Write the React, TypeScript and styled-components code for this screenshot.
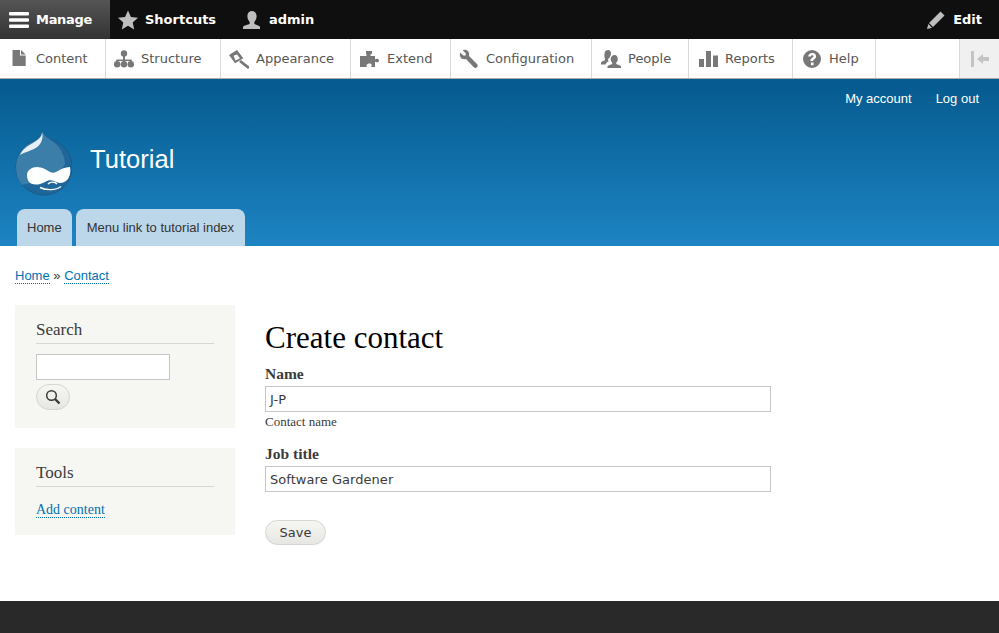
import { FunctionComponent, ReactNode } from "react"
import styled, { createGlobalStyle } from "styled-components"

const GlobalStyle = createGlobalStyle`
	html, body {
		margin: 0;
		padding: 0;
		background: white;
	}
	* {
		box-sizing: border-box;
	}
`

const Page = styled.div`
	display: flex;
	flex-direction: column;
	height: 633px;
	overflow: hidden;
	font-family: "Liberation Sans", Arial, sans-serif;
`

const TopBar = styled.div`
	display: flex;
	flex-shrink: 0;
	height: 39px;
	background-color: #0f0f0f;
	font-family: "DejaVu Sans", sans-serif;
	font-size: 13px;
	font-weight: 700;
	color: white;
`

const TopItem = styled.div<{$active?: boolean; $push?: boolean; $end?: number}>`
	display: flex;
	align-items: center;
	gap: 7px;
	width: ${({$end}) => $end ? `${$end}px` : 'auto'};
	padding: 0 8px 0 ${({$active}) => $active ? 9 : 8}px;
	margin-left: ${({$push}) => $push ? 'auto' : '0'};
	background: ${({$active}) => $active ? 'linear-gradient(#555555, #333333)' : 'none'};
`

const ManageLabel = styled.span`
	letter-spacing: -0.3px;
`

const EditLabel = styled.span`
	margin-right: 9px;
`

const Tray = styled.div`
	display: flex;
	flex-shrink: 0;
	height: 40px;
	background-color: white;
	border-bottom: 1px solid #aaaaaa;
	font-family: "DejaVu Sans", sans-serif;
	font-size: 13px;
	color: #565656;
`

const TrayItem = styled.div<{$width: number; $pad?: number}>`
	display: flex;
	align-items: center;
	gap: 7px;
	width: ${({$width}) => $width}px;
	padding-left: ${({$pad}) => $pad ?? 9}px;
	border-right: 1px solid #d9d9d9;
`

const TrayToggle = styled.div`
	display: flex;
	align-items: center;
	justify-content: center;
	margin-left: auto;
	width: 40px;
	background-color: #f0f0f0;
	border-left: 1px solid #d9d9d9;
`

const Header = styled.header`
	display: flex;
	flex-direction: column;
	flex-shrink: 0;
	height: 167px;
	background: linear-gradient(#0779bf00, #1d84c3 100%), #055a8e;
	color: white;
`

const SecondaryMenu = styled.div`
	display: flex;
	justify-content: flex-end;
	gap: 24px;
	padding: 12px 20px 0 0;
	font-size: 13px;
	line-height: 15px;
`

const Branding = styled.div`
	display: flex;
	align-items: center;
	gap: 18px;
	margin-top: 24px;
	padding-left: 15px;
`

const SiteName = styled.div`
	margin-bottom: 8px;
	font-size: 25.6px;
	line-height: 30px;
`

const Tabs = styled.div`
	display: flex;
	gap: 4px;
	margin-top: auto;
	padding-left: 17px;
`

const Tab = styled.div<{$pad: number}>`
	height: 37px;
	padding: 11px ${({$pad}) => $pad}px 0;
	border-radius: 8px 8px 0 0;
	background-color: #bcd7ea;
	color: #333333;
	font-size: 13px;
	line-height: 15px;
`

const Main = styled.main`
	flex: 1;
	padding: 22px 15px 0;
`

const A = styled.a`
	color: #0071b3;
	text-decoration: none;
	border-bottom: 1px dotted #0071b3;
`

const Breadcrumb = styled.div`
	font-size: 13px;
	line-height: 15px;
	color: #3b3b3b;
`

const Columns = styled.div`
	display: flex;
	margin-top: 22px;
`

const Sidebar = styled.aside`
	display: flex;
	flex-direction: column;
	gap: 20px;
	flex-shrink: 0;
	width: 220px;
`

const Block = styled.section<{$height: number}>`
	height: ${({$height}) => $height}px;
	padding: 16px 21px 0;
	background-color: #f6f6f2;
`

const BlockTitle = styled.h2`
	margin: 0 0 10px;
	padding-bottom: 4px;
	border-bottom: 1px solid #d6d6d6;
	font-family: "Liberation Serif", Georgia, serif;
	font-size: 17px;
	font-weight: 400;
	line-height: 18px;
	color: #3b3b3b;
`

const SearchInput = styled.div`
	width: 134px;
	height: 26px;
	background-color: white;
	border: 1px solid #c6c6c6;
`

const RoundButton = styled.div`
	display: flex;
	align-items: center;
	justify-content: center;
	border: 1px solid #d4d4d4;
	border-radius: 13px;
	background: linear-gradient(#f6f6f3, #e6e6e3);
	color: #3a3a3a;
	font-family: "DejaVu Sans", sans-serif;
	font-size: 13px;
`

const SearchButton = styled(RoundButton)`
	width: 34px;
	height: 26px;
	margin-top: 4px;
`

const SaveButton = styled(RoundButton)`
	width: 61px;
	height: 25px;
	margin-top: 28px;
`

const SideLink = styled(A)`
	font-family: "Liberation Serif", Georgia, serif;
	font-size: 14px;
`

const SideLinkRow = styled.div`
	padding-top: 4px;
	line-height: 15px;
`

const Content = styled.div`
	flex-shrink: 0;
	width: 506px;
	margin-left: 30px;
	padding-top: 16px;
	font-family: "Liberation Serif", Georgia, serif;
	color: #3b3b3b;
`

const Title = styled.h1`
	margin: 0;
	font-size: 31px;
	font-weight: 400;
	line-height: 34px;
	color: black;
`

const Field = styled.div`
	margin-top: 10px;
	& + & {
		margin-top: 16px;
	}
`

const Label = styled.div`
	margin-bottom: 3px;
	font-size: 15.5px;
	font-weight: 700;
	line-height: 18px;
`

const TextInput = styled.div`
	height: 26px;
	padding-left: 4px;
	border: 1px solid #c6c6c6;
	font-family: "DejaVu Sans", sans-serif;
	font-size: 13px;
	letter-spacing: 0.05px;
	line-height: 26px;
	color: #3b3b3b;
`

const Description = styled.div`
	margin-top: 2px;
	font-size: 13px;
	line-height: 15px;
`

const Footer = styled.footer`
	flex-shrink: 0;
	height: 32px;
	background-color: #292929;
`

const Icon: FunctionComponent<{children: ReactNode; color?: string; size?: number}> = ({children, color = '#787878', size = 20}) => (
	<svg width={size} height={size} viewBox="0 0 20 20" fill={color} style={{flexShrink: 0}}>{children}</svg>
)

const DrupalLogo = () => (
	<svg width="57" height="66" viewBox="0 0 57 66" style={{flexShrink: 0}}>
		<path d="M27 1C27 5 24 8 20 10.500A28 28 0 1 0 36.500 10C32 7.500 29 5 27 1Z" fill="#1f669a" stroke="#175a8a"/>
		<path d="M27 1.500C27 5 24 8 20 11A27.500 27.500 0 0 0 1 37C1 44 3 50 7 55 16 52 40 52 50 34 50 25 44 15 36.500 10.500 32 7.500 29 5 27 1.500Z" fill="#3c7eaa"/>
		<path d="M27 2C27 7 23 10 18 13 12 16 7 20 5 25 10 22 15 21 19 19 25 16 29 10 27 2Z" fill="#e6f0f6"/>
		<path d="M12 45C12 40 17 37 22 37 27 37 31 39.500 35 42 37 43 39 43 41 42 45 39.500 50 37 55 37 56 42 55 48 51 51 47 54 42 53 39 51 36 49.500 33 50 30 52 26 54.500 20 55.500 16 53.500 13 52 12 48 12 45Z" fill="white"/>
		<path d="M25 57.500C31 60.500 41 60.500 46 56.500M33 54C35 51.500 40 51.500 42 54" fill="none" stroke="white" strokeWidth="1.400"/>
	</svg>
)

export default function App() {
	return (
		<Page>
			<GlobalStyle/>
			<TopBar>
				<TopItem $active $end={110}>
					<Icon color="white">
						<rect x="0" y="2" width="20" height="3.600" rx="1"/>
						<rect x="0" y="8.200" width="20" height="3.600" rx="1"/>
						<rect x="0" y="14.400" width="20" height="3.600" rx="1"/>
					</Icon>
					<ManageLabel>Manage</ManageLabel>
				</TopItem>
				<TopItem $end={124}>
					<Icon color="#bebebe"><path d="M10 0.500l2.900 6.500 7.100.7-5.300 4.700 1.500 7L10 15.800 3.800 19.400l1.500-7L0 7.700l7.100-.7Z"/></Icon>
					Shortcuts
				</TopItem>
				<TopItem>
					<Icon color="#bebebe"><path d="M10 1c3 0 4.600 2.400 4.600 5.300 0 2.500-1 4.500-2.300 5.600v1.600c0 1 3.700 1.500 5.700 3.200V19H1v-2.300c2-1.700 6.700-2.200 6.700-3.200v-1.600C6.400 10.800 5.400 8.800 5.400 6.300 5.400 3.400 7 1 10 1Z"/></Icon>
					admin
				</TopItem>
				<TopItem $push>
					<Icon color="#bebebe"><path d="M14.500 1.500l4 4L7 17l-4-4ZM2.300 14l3.700 3.700-5 1.300Z"/></Icon>
					<EditLabel>Edit</EditLabel>
				</TopItem>
			</TopBar>
			<Tray>
				<TrayItem $width={106}>
					<Icon><path d="M3.500 1H11v5.500h5.700V17H3.500ZM12 1l4.700 4.500H12Z"/></Icon>
					Content
				</TrayItem>
				<TrayItem $width={115} $pad={8}>
					<Icon>
						<path d="M9 6h2v4.500h6.800V14h-1.600v-2H11v2H9v-2H3.800v2H2.200v-3.500H9Z"/>
						<circle cx="10" cy="4.500" r="3.200"/><circle cx="3.200" cy="15.300" r="3.200"/><circle cx="10" cy="15.300" r="3.200"/><circle cx="16.800" cy="15.300" r="3.200"/>
					</Icon>
					Structure
				</TrayItem>
				<TrayItem $width={130} $pad={8}>
					<Icon>
						<path fillRule="evenodd" d="M0 6l8-5 6.300 8.300L6 14.300ZM4.500 6.800l6.500 2.500-3-3.800ZM4.500 6.800l2 4.700 4.500-2.200Z"/>
						<path d="M11 12l9 7" fill="none" stroke="#787878" strokeWidth="2.800"/>
					</Icon>
					Appearance
				</TrayItem>
				<TrayItem $width={100}>
					<Icon><path d="M6 2h6v2.500l-1.500 1V7h4.500v3.500c1.500-1.500 4-1 4 1s-2.500 2.500-4 1V18h-4c1.500-2 .5-3.500-1.500-3.500S5.500 16 7 18H0V7h6.500V5.500L6 4.500Z"/></Icon>
					Extend
				</TrayItem>
				<TrayItem $width={141} $pad={8}>
					<Icon><path d="M6 .8c-1.500 0-2.300.5-2.300.5l3 3v2.300H4.300l-3-3S.6 5 1 7c.5 2.500 3.400 4 6 3l7.800 8.200c1 1 2.300 1 3.200 0s.8-2.300 0-3.200L10 7c1-3-1-6.200-4-6.200Z"/></Icon>
					Configuration
				</TrayItem>
				<TrayItem $width={97}>
					<Icon><path d="M7 1c2 0 3 1.500 3 3.500 0 1.200-.4 2.300-1 3 0 1-1 2-2 2.500-.5 1.500 1 2 1 2-1 .5-3 1.500-3.500 3.500H0v-2c1-1.500 4-1.500 4-3V9.500C3 8.500 3.500 6 3.500 4.500 3.500 2.500 5 1 7 1ZM13.500 6c2.200 0 3.300 1.800 3.300 4 0 1.800-.7 3-1.600 3.700v.8c0 1 3.800 1.500 4.800 2.800V19H6.500v-1.700c1-1.300 4.800-1.800 4.800-2.800v-.8c-.9-.7-1.600-1.900-1.600-3.700 0-2.200 1.600-4 3.800-4Z"/></Icon>
					People
				</TrayItem>
				<TrayItem $width={104}>
					<Icon><path d="M1 10h5v8H1ZM8 2h5v16H8ZM15 6.500h5V18h-5Z"/></Icon>
					Reports
				</TrayItem>
				<TrayItem $width={83}>
					<Icon><path fillRule="evenodd" d="M10 1a9 9 0 1 1 0 18 9 9 0 0 1 0-18ZM10.300 4C8 4 6.300 5.200 6.200 7.500h2.700c.1-.9.600-1.300 1.300-1.300s1.200.4 1.200 1c0 1.500-3 1.700-3 4.300v.5h2.600V12c0-1.500 3.100-1.800 3.100-4.700C14.100 5.200 12.500 4 10.300 4ZM8.900 13.500v2.800h2.700v-2.800Z"/></Icon>
					Help
				</TrayItem>
				<TrayToggle>
					<Icon color="#c4c4c4">
						<path d="M1 2h3v16H1ZM7 10l6-5v3h6v4h-6v3Z"/>
					</Icon>
				</TrayToggle>
			</Tray>
			<Header>
				<SecondaryMenu>
					<span>My account</span>
					<span>Log out</span>
				</SecondaryMenu>
				<Branding>
					<DrupalLogo/>
					<SiteName>Tutorial</SiteName>
				</Branding>
				<Tabs>
					<Tab $pad={10}>Home</Tab>
					<Tab $pad={11}>Menu link to tutorial index</Tab>
				</Tabs>
			</Header>
			<Main>
				<Breadcrumb><A>Home</A> » <A>Contact</A></Breadcrumb>
				<Columns>
					<Sidebar>
						<Block $height={123}>
							<BlockTitle>Search</BlockTitle>
							<SearchInput/>
							<SearchButton>
								<svg width="16" height="16" viewBox="0 0 16 16" fill="none" stroke="#3a3a3a">
									<circle cx="6.500" cy="6.500" r="4.800" strokeWidth="1.500"/>
									<path d="M10 10l4.500 4.500" strokeWidth="2.400"/>
								</svg>
							</SearchButton>
						</Block>
						<Block $height={87}>
							<BlockTitle>Tools</BlockTitle>
							<SideLinkRow><SideLink>Add content</SideLink></SideLinkRow>
						</Block>
					</Sidebar>
					<Content>
						<Title>Create contact</Title>
						<Field>
							<Label>Name</Label>
							<TextInput>J-P</TextInput>
							<Description>Contact name</Description>
						</Field>
						<Field>
							<Label>Job title</Label>
							<TextInput>Software Gardener</TextInput>
						</Field>
						<SaveButton>Save</SaveButton>
					</Content>
				</Columns>
			</Main>
			<Footer/>
		</Page>
	)
}
